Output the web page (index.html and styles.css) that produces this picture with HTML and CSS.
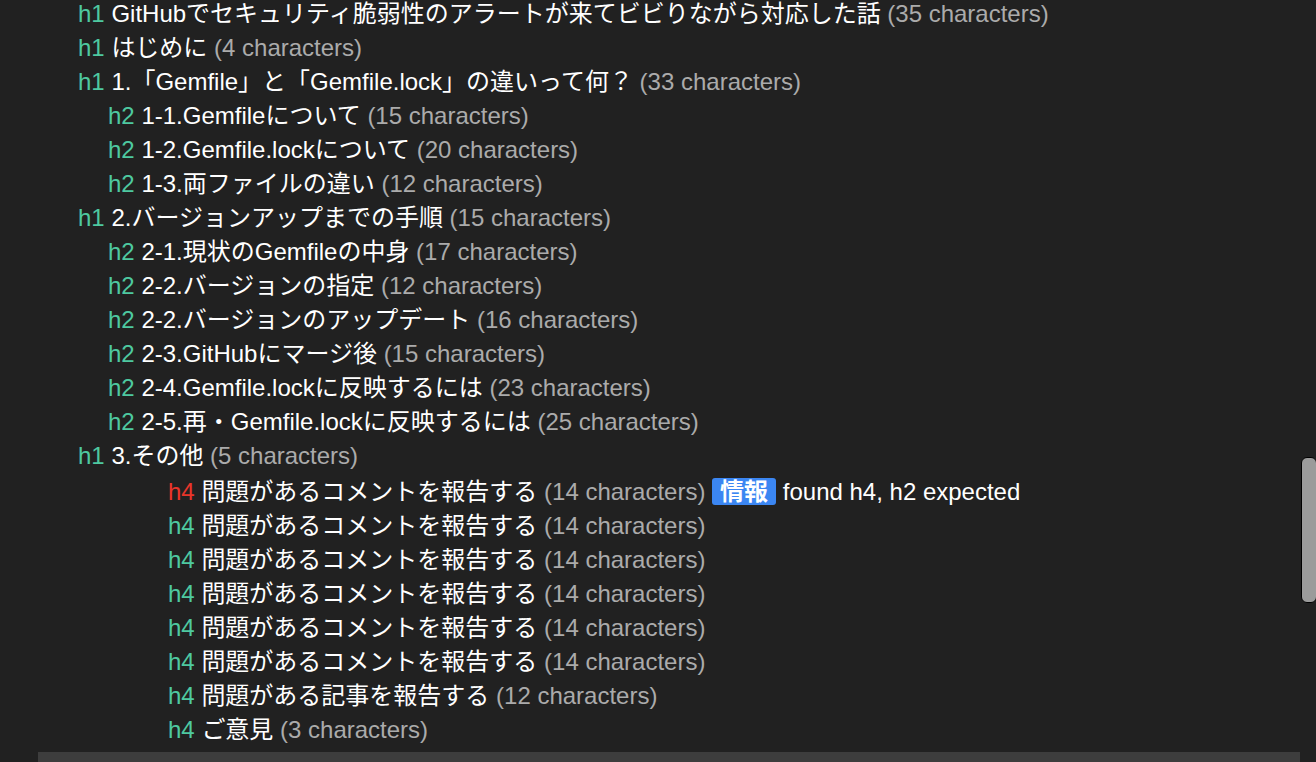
FILE: index.html
```html
<!DOCTYPE html>
<html lang="ja">
<head>
<meta charset="utf-8">
<link rel="stylesheet" href="styles.css">
</head>
<body>
<div class="outline">
  <div class="row l1"><span class="tag">h1</span> <span class="title">GitHubでセキュリティ脆弱性のアラートが来てビビりながら対応した話</span> <span class="count">(35 characters)</span></div>
  <div class="row l1"><span class="tag">h1</span> <span class="title">はじめに</span> <span class="count">(4 characters)</span></div>
  <div class="row l1"><span class="tag">h1</span> <span class="title">1.「Gemfile」と「Gemfile.lock」の違いって何？</span> <span class="count">(33 characters)</span></div>
  <div class="row l2"><span class="tag">h2</span> <span class="title">1-1.Gemfileについて</span> <span class="count">(15 characters)</span></div>
  <div class="row l2"><span class="tag">h2</span> <span class="title">1-2.Gemfile.lockについて</span> <span class="count">(20 characters)</span></div>
  <div class="row l2"><span class="tag">h2</span> <span class="title">1-3.両ファイルの違い</span> <span class="count">(12 characters)</span></div>
  <div class="row l1"><span class="tag">h1</span> <span class="title">2.バージョンアップまでの手順</span> <span class="count">(15 characters)</span></div>
  <div class="row l2"><span class="tag">h2</span> <span class="title">2-1.現状のGemfileの中身</span> <span class="count">(17 characters)</span></div>
  <div class="row l2"><span class="tag">h2</span> <span class="title">2-2.バージョンの指定</span> <span class="count">(12 characters)</span></div>
  <div class="row l2"><span class="tag">h2</span> <span class="title">2-2.バージョンのアップデート</span> <span class="count">(16 characters)</span></div>
  <div class="row l2"><span class="tag">h2</span> <span class="title">2-3.GitHubにマージ後</span> <span class="count">(15 characters)</span></div>
  <div class="row l2"><span class="tag">h2</span> <span class="title">2-4.Gemfile.lockに反映するには</span> <span class="count">(23 characters)</span></div>
  <div class="row l2"><span class="tag">h2</span> <span class="title">2-5.再・Gemfile.lockに反映するには</span> <span class="count">(25 characters)</span></div>
  <div class="row l1"><span class="tag">h1</span> <span class="title">3.その他</span> <span class="count">(5 characters)</span></div>
  <div class="row l4 warn"><span class="tag bad">h4</span> <span class="title">問題があるコメントを報告する</span> <span class="count">(14 characters)</span> <span class="badge">情報</span> <span class="msg">found h4, h2 expected</span></div>
  <div class="row l4"><span class="tag">h4</span> <span class="title">問題があるコメントを報告する</span> <span class="count">(14 characters)</span></div>
  <div class="row l4"><span class="tag">h4</span> <span class="title">問題があるコメントを報告する</span> <span class="count">(14 characters)</span></div>
  <div class="row l4"><span class="tag">h4</span> <span class="title">問題があるコメントを報告する</span> <span class="count">(14 characters)</span></div>
  <div class="row l4"><span class="tag">h4</span> <span class="title">問題があるコメントを報告する</span> <span class="count">(14 characters)</span></div>
  <div class="row l4"><span class="tag">h4</span> <span class="title">問題があるコメントを報告する</span> <span class="count">(14 characters)</span></div>
  <div class="row l4"><span class="tag">h4</span> <span class="title">問題がある記事を報告する</span> <span class="count">(12 characters)</span></div>
  <div class="row l4"><span class="tag">h4</span> <span class="title">ご意見</span> <span class="count">(3 characters)</span></div>
</div>
<div class="hbar"></div>
<div class="vthumb"></div>
</body>
</html>
```
FILE: styles.css
```css
html, body {
  margin: 0;
  padding: 0;
  background: #212121;
  width: 1316px;
  height: 762px;
  overflow: hidden;
  position: relative;
  font-family: "Liberation Sans", "Noto Sans CJK JP", sans-serif;
  font-size: 24px;
  color: #ffffff;
}
.outline {
  display: flex;
  flex-direction: column;
  margin-top: -3px;
}
.row {
  height: 34px;
  line-height: 34px;
  white-space: nowrap;
}
.row.warn {
  margin-top: 2px;
}
.l1 { padding-left: 78px; }
.l2 { padding-left: 108px; }
.l4 { padding-left: 168px; }
.tag { color: #4ec9a0; }
.tag.bad { color: #e8352a; }
.count { color: #ababab; }
.badge {
  background: #3b86f2;
  color: #fff;
  font-weight: bold;
  border-radius: 3px;
  padding: 0 8px;
  line-height: 27px;
  height: 27px;
  display: inline-block;
  vertical-align: middle;
  position: relative;
  top: -2px;
}
.hbar {
  position: absolute;
  left: 38px;
  top: 752px;
  width: 1262px;
  height: 10px;
  background: #3d3d3d;
}
.vthumb {
  position: absolute;
  left: 1301px;
  top: 457px;
  width: 16px;
  height: 146px;
  background: #9b9b9b;
  border: 1px solid #000;
  border-radius: 6px;
  box-sizing: border-box;
}
```
